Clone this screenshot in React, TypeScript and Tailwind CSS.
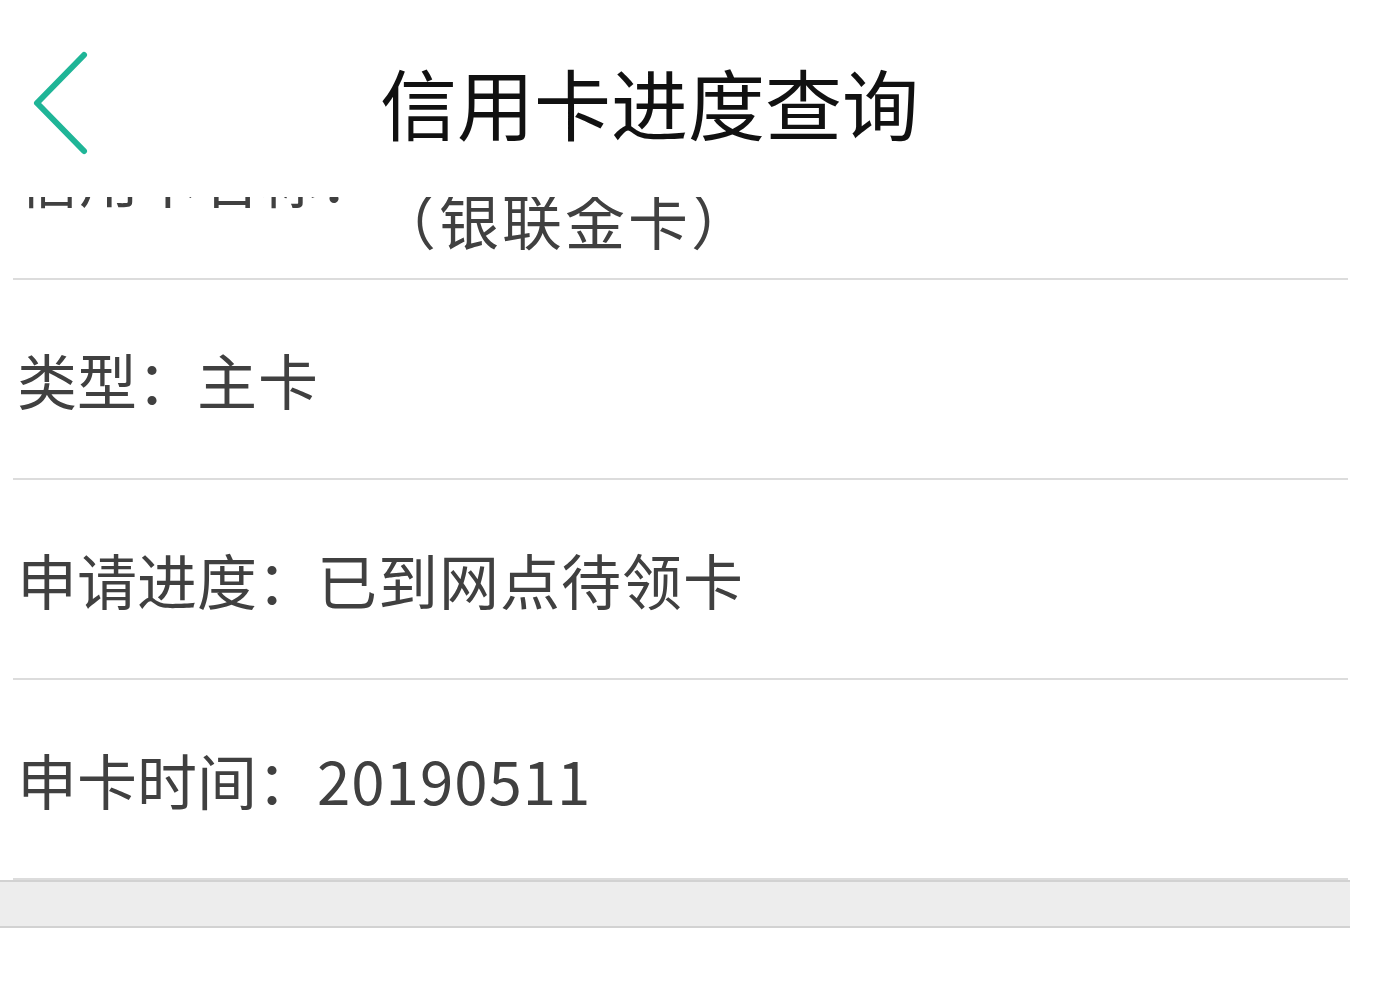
const font = { fontFamily: '"Noto Sans CJK SC", "Noto Sans", sans-serif' };

function BackIcon() {
  return (
    <svg width="64" height="108" viewBox="0 0 64 108" fill="none">
      <path d="M55 5 L8 53 L55 101" stroke="#1fb597" strokeWidth="6" strokeLinecap="round" strokeLinejoin="round" />
    </svg>
  );
}

const rows = [
  { label: "类型：", value: "主卡" },
  { label: "申请进度：", value: "已到网点待领卡" },
  { label: "申卡时间：", value: "20190511" },
];

export default function App() {
  return (
    <div className="min-h-screen bg-white overflow-hidden" style={font}>
      <div className="w-[1350px] h-[988px] overflow-hidden flex flex-col">
        <header className="h-[197px] shrink-0 bg-white flex items-start">
          <div className="w-[380px] shrink-0 pt-[50px] pl-[29px]">
            <BackIcon />
          </div>
          <h1 className="pt-[52px] text-[77px] leading-[100px] text-[#111] whitespace-nowrap">信用卡进度查询</h1>
        </header>

        {/* scrolled list: first row is partly under the header */}
        <div className="flex-1 overflow-hidden">
          <div className="-mt-[121px]">
            <div className="ml-[13px] w-[1335px] h-[204px] border-b-2 border-[#dcdcdc] flex items-center text-[60px] text-[#404040]">
              <span className="pl-[6px] w-[363px] shrink-0 leading-none whitespace-nowrap">信用卡名称：</span>
              <div className="leading-[84px] whitespace-nowrap tracking-[3px]">
                <div>金穗信用卡</div>
                <div>（银联金卡）</div>
              </div>
            </div>

            {rows.map((row) => (
              <div
                key={row.label}
                className="ml-[13px] w-[1335px] h-[200px] border-b-2 border-[#dcdcdc] flex items-center text-[60px] text-[#404040] whitespace-nowrap"
              >
                <span className="pl-[4px]">{row.label}</span>
                <span className="tracking-[1px]">{row.value}</span>
              </div>
            ))}

            <div className="w-[1350px] h-[48px] bg-[#ededed] border-y-2 border-[#d2d2d2]" />
            <div className="h-[80px] bg-white" />
          </div>
        </div>
      </div>
    </div>
  );
}
